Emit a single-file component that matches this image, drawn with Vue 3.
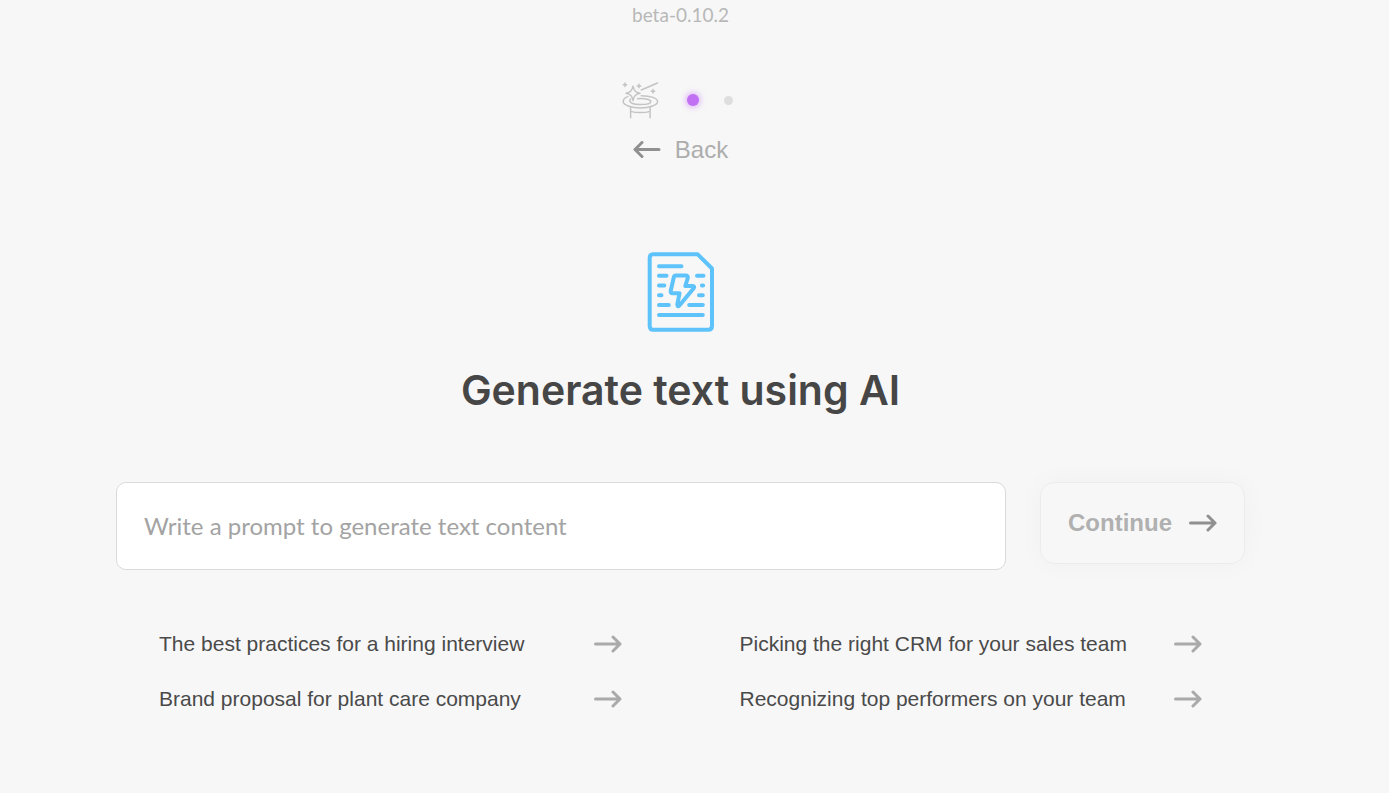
<script setup>
import { ref } from 'vue';

const prompt = ref('');

const suggestions = [
  'The best practices for a hiring interview',
  'Picking the right CRM for your sales team',
  'Brand proposal for plant care company',
  'Recognizing top performers on your team',
];
</script>

<template>
  <main class="page">
    <div class="version">beta-0.10.2</div>

    <div class="steps">
      <svg class="hat" viewBox="0 0 38 38" aria-hidden="true">
        <path d="M12 5.2C13 9.8 14.400 11.300 19 12.300C14.400 13.300 13 14.800 12 19.600C11 14.800 9.600 13.300 5 12.300C9.600 11.300 11 9.800 12 5.200Z" />
        <path d="M20.300 9L36.500 2" />
        <path d="M4 2V5.600M2.200 3.800H5.800M18 3.200V6.800M16.200 5H19.800M32 8.500V12.100M30.200 10.300H33.800" />
        <path d="M6.800 15.600C3.800 16.700 2.200 18.500 2.200 20.500C2.200 24 10 26.900 19.400 26.900S36.600 24 36.600 20.500C36.600 17.200 29.500 14.700 20.200 14.700" />
        <path d="M9.500 18C7.200 21.300 11.700 23.600 19.400 23.600C25.600 23.600 29.800 22.300 29.800 20.500C29.800 18.500 24.800 17.300 16.500 17.700" />
        <path d="M9.600 26.500V36.800M29.100 26.500V36.800M9.600 30.400C15 32 23.800 32 29.100 30.400" />
      </svg>
      <span class="dot active"></span>
      <span class="dot"></span>
    </div>

    <button class="back" type="button">
      <svg class="arrow" viewBox="0 0 28 18" aria-hidden="true">
        <path d="M26 8.500H2M9 1.500L2 8.500L9 15.500" />
      </svg>
      Back
    </button>

    <svg class="document" viewBox="0 0 68 80" aria-hidden="true">
      <path d="M6 2.200H50.500L65 16.500V74Q65 77.800 61.200 77.800H6Q2.700 77.800 2.700 74V6Q2.700 2.200 6 2.200Z" />
      <path d="M12 14.300H34.500M12 23.700H19.500M50 23.700H56.500M12 33.500H17.300M54.900 33.500H56.100M12 43.300H14.500M52 43.300H55.800M12 53.100H21.800M42.200 53.100H55.800M12 63H55.800" />
      <path d="M28.800 23.500H38.500Q41.500 23.500 40.700 26.200L38.300 34H45.500Q48.300 34 46.500 36.500L32.400 53.500Q30.400 55.300 30.300 52.500L32.500 41.300H25.500Q23.400 41.300 23.700 39L26.800 25.300Q27.300 23.500 28.800 23.500Z" />
    </svg>

    <h1>Generate text using AI</h1>

    <form class="prompt-form" @submit.prevent>
      <input
        v-model="prompt"
        class="prompt"
        type="text"
        aria-label="Prompt"
        placeholder="Write a prompt to generate text content"
      />
      <button class="continue" type="submit">
        Continue
        <svg class="arrow" viewBox="0 0 28 18" aria-hidden="true">
          <path d="M1.500 9H26M19 2L26 9L19 16" />
        </svg>
      </button>
    </form>

    <div class="suggestions">
      <button
        v-for="suggestion in suggestions"
        :key="suggestion"
        class="suggestion"
        type="button"
        @click="prompt = suggestion"
      >
        {{ suggestion }}
        <svg class="arrow" viewBox="0 0 28 18" aria-hidden="true">
          <path d="M1.500 9H26M19 2L26 9L19 16" />
        </svg>
      </button>
    </div>
  </main>
</template>

<style>
body {
  background-color: #f7f7f7;
}
</style>

<style scoped>
.page {
  display: flex;
  flex-direction: column;
  align-items: center;
  padding: 3px 144px 48px 116px;
  font-family: "Liberation Sans", Arial, sans-serif;
}

button {
  padding: 0;
  border: none;
  background: none;
  font-family: inherit;
  cursor: pointer;
}

svg {
  fill: none;
  stroke-linecap: round;
  stroke-linejoin: round;
}

.version {
  color: #b8b8b8;
  font-family: Lato, sans-serif;
  font-size: 19px;
  line-height: 24px;
}

.steps {
  display: flex;
  align-items: center;
  margin-top: 54px;
  padding-right: 8px;
  gap: 25px;
}

.hat {
  width: 38px;
  height: 38px;
  margin-right: 3px;
  stroke: #c4c4c4;
  stroke-width: 1.5;
}

.dot {
  width: 9px;
  height: 9px;
  border-radius: 50%;
  background-color: #dedede;
}

.dot.active {
  width: 12px;
  height: 12px;
  background-color: #c16ff3;
  box-shadow: 0 0 6px 1px #d9a6f8;
}

.arrow {
  flex: none;
  width: 28px;
  height: 18px;
  stroke: #909090;
  stroke-width: 3;
}

.back {
  display: flex;
  align-items: center;
  gap: 14px;
  margin-top: 17px;
  color: #adadad;
  font-size: 24px;
  line-height: 28px;
}

.document {
  width: 68px;
  height: 80px;
  margin-top: 88px;
  stroke: #5ec3fb;
  stroke-width: 4;
}

h1 {
  margin: 32px 0 0;
  color: #464646;
  font-family: Inter, sans-serif;
  font-size: 41px;
  font-weight: 600;
  line-height: 52px;
}

.prompt-form {
  display: flex;
  align-items: flex-start;
  align-self: stretch;
  gap: 34px;
  margin-top: 66px;
}

.prompt {
  flex: 1;
  min-width: 0;
  box-sizing: border-box;
  height: 88px;
  padding: 0 27px 2px;
  border: 1px solid #dadada;
  border-radius: 10px;
  background-color: white;
  color: #464646;
  font-family: Lato, sans-serif;
  font-size: 24px;
}

.prompt::placeholder {
  color: #a3a3a3;
}

.continue {
  display: flex;
  align-items: center;
  gap: 17px;
  box-sizing: border-box;
  height: 82px;
  padding: 0 27px;
  border: 1px solid #ececec;
  border-radius: 14px;
  box-shadow: 0 0 28px rgba(0, 0, 0, 0.03);
  color: #b0b0b0;
  font-size: 24px;
  font-weight: bold;
}

.suggestions {
  display: grid;
  grid-template-columns: 1fr 1fr;
  align-self: stretch;
  gap: 27px 118px;
  margin: 60px 43px 0;
}

.suggestion {
  display: flex;
  align-items: center;
  justify-content: space-between;
  color: #4a4a4a;
  font-size: 21px;
  line-height: 28px;
  text-align: left;
}

.suggestion .arrow {
  stroke: #aaaaaa;
}
</style>
